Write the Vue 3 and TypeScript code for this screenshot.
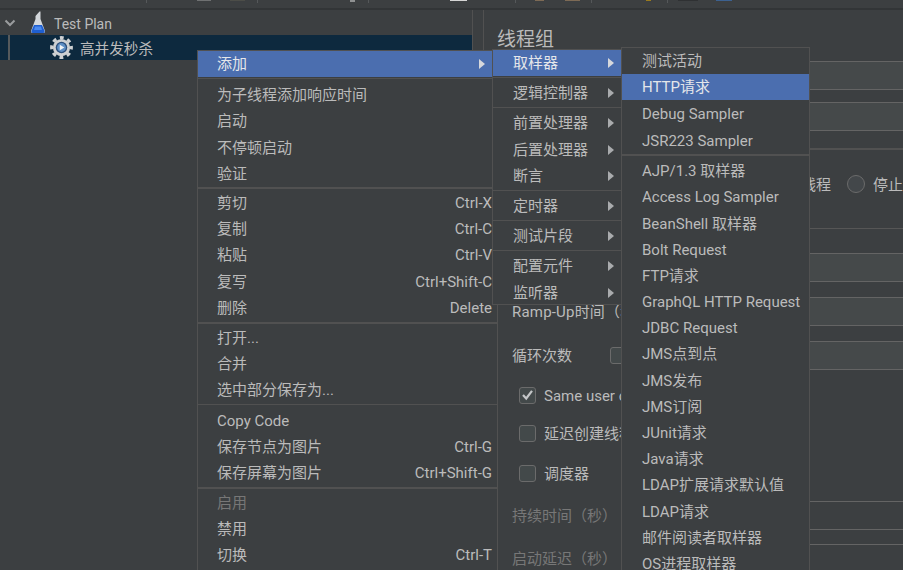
<script setup lang="ts">
interface Item { t?: string; k?: string; sel?: boolean; arrow?: boolean; off?: boolean; sep?: boolean; thick?: boolean }

const chips = [
  { x: 146, w: 1, h: 3, c: '#55585a' }, { x: 197, w: 14, h: 1, c: '#6f7172' }, { x: 230, w: 15, h: 1, c: '#4c4d48' },
  { x: 257, w: 1, h: 3, c: '#55585a' }, { x: 350, w: 5, h: 2, c: '#8f9192' }, { x: 368, w: 1, h: 3, c: '#55585a' },
  { x: 450, w: 17, h: 1, c: '#d5d5d5' }, { x: 515, w: 1, h: 3, c: '#55585a' }, { x: 535, w: 9, h: 1, c: '#7d6a55' },
  { x: 565, w: 15, h: 1, c: '#7d6a55' }, { x: 591, w: 1, h: 3, c: '#55585a' }, { x: 646, w: 5, h: 1, c: '#9a7b1e' },
  { x: 667, w: 1, h: 3, c: '#55585a' }, { x: 678, w: 20, h: 1, c: '#2f3133' }, { x: 716, w: 16, h: 1, c: '#3c6190' },
]
const chipList = chips.map((c, i) => ({ ...c, gap: i === 0 ? c.x : c.x - chips[i - 1].x - chips[i - 1].w }))

const main: Item[] = [
  { t: '添加', sel: true, arrow: true }, { sep: true },
  { t: '为子线程添加响应时间' }, { t: '启动' }, { t: '不停顿启动' }, { t: '验证' }, { sep: true, thick: true },
  { t: '剪切', k: 'Ctrl-X' }, { t: '复制', k: 'Ctrl-C' }, { t: '粘贴', k: 'Ctrl-V' }, { t: '复写', k: 'Ctrl+Shift-C' }, { t: '删除', k: 'Delete' }, { sep: true, thick: true },
  { t: '打开...' }, { t: '合并' }, { t: '选中部分保存为...' }, { sep: true },
  { t: 'Copy Code' }, { t: '保存节点为图片', k: 'Ctrl-G' }, { t: '保存屏幕为图片', k: 'Ctrl+Shift-G' }, { sep: true, thick: true },
  { t: '启用', off: true }, { t: '禁用' }, { t: '切换', k: 'Ctrl-T' },
]
const add: Item[] = [
  { t: '取样器', sel: true, arrow: true }, { sep: true },
  { t: '逻辑控制器', arrow: true }, { sep: true },
  { t: '前置处理器', arrow: true }, { t: '后置处理器', arrow: true }, { t: '断言', arrow: true }, { sep: true },
  { t: '定时器', arrow: true }, { sep: true },
  { t: '测试片段', arrow: true }, { sep: true },
  { t: '配置元件', arrow: true }, { t: '监听器', arrow: true },
]
const samplers: Item[] = [
  { t: '测试活动' }, { t: 'HTTP请求', sel: true }, { t: 'Debug Sampler' }, { t: 'JSR223 Sampler' }, { sep: true, thick: true },
  ...['AJP/1.3 取样器', 'Access Log Sampler', 'BeanShell 取样器', 'Bolt Request', 'FTP请求', 'GraphQL HTTP Request', 'JDBC Request', 'JMS点到点', 'JMS发布', 'JMS订阅', 'JUnit请求', 'Java请求', 'LDAP扩展请求默认值', 'LDAP请求', '邮件阅读者取样器', 'OS进程取样器'].map((t) => ({ t })),
]
const menus = [
  { cls: 'menu-main', items: main },
  { cls: 'menu-add', items: add },
  { cls: 'menu-samplers', items: samplers },
]
</script>

<template>
  <div class="app">
    <div class="toolbar">
      <i v-for="c in chipList" :key="c.x" class="chip" :style="{ marginLeft: c.gap + 'px', width: c.w + 'px', height: c.h + 'px', background: c.c }"></i>
    </div>
    <div class="body">
      <div class="tree">
        <div class="node root">
          <svg class="chev" width="12" height="8" viewBox="0 0 12 8"><path d="M1.5 1.5 L6 6 L10.5 1.5" fill="none" stroke="#9a9c9e" stroke-width="2" /></svg>
          <svg class="flask" width="16" height="23" viewBox="0 0 16 23">
            <path d="M9.5 0.5 L10.5 0.5 L10.5 8 L15 20 Q15.5 22 13.5 22 L2.5 22 Q0.5 22 1 20 L5.5 8 L5.5 5 Z" fill="#d4d8dc" />
            <path d="M4 14 L12 14 L14.6 20 Q15 22 13.4 22 L2.6 22 Q1 22 1.4 20 Z" fill="#1f5fd0" />
            <path d="M5 15.5 L11 15.5 L12 19 L4 19 Z" fill="#4a8af0" />
          </svg>
          <span class="label">Test Plan</span>
        </div>
        <div class="node selected">
          <i class="guide"></i>
          <svg class="gear" width="23" height="23" viewBox="0 0 24 24">
            <circle cx="12" cy="12" r="9" fill="#cfd1d3" />
            <circle cx="12" cy="12" r="10.2" fill="none" stroke="#cfd1d3" stroke-width="3.4" stroke-dasharray="4 4.01" stroke-dashoffset="2" />
            <circle cx="12" cy="12" r="6" fill="#2c4f7c" />
            <circle cx="12" cy="12" r="4.6" fill="#5f8fc4" />
            <path d="M10.2 9.2 L15 12 L10.2 14.8 Z" fill="#f2f4f6" />
          </svg>
          <span class="label">高并发秒杀</span>
        </div>
      </div>
      <div class="splitter"></div>
      <div class="pane">
        <h1 class="title">线程组</h1>
        <div class="field name"></div>
        <div class="field comment"></div>
        <div class="rule"></div>
        <div class="radios">
          <span class="radio-text">停止线程</span>
          <i class="radio"></i>
          <span class="radio-text">停止测试</span>
        </div>
        <div class="rule second"></div>
        <div class="field threads"></div>
        <div class="form-row ramp"><span class="form-label wide">Ramp-Up时间（秒）</span><div class="field grow"></div></div>
        <div class="form-row loop">
          <span class="form-label">循环次数</span>
          <i class="check"></i>
          <div class="field grow"></div>
        </div>
        <div class="check-row same">
          <i class="check on"><svg width="13" height="12" viewBox="0 0 13 12"><path d="M2 6 L5.2 9.5 L11 1.8" fill="none" stroke="#c4c6c8" stroke-width="2.2" /></svg></i>
          <span>Same user on each iteration</span>
        </div>
        <div class="check-row delay"><i class="check"></i><span>延迟创建线程直到需要</span></div>
        <div class="check-row sched"><i class="check"></i><span>调度器</span></div>
        <div class="form-row duration"><span class="form-label wide off">持续时间（秒）</span><div class="field grow plain"></div></div>
        <div class="form-row startup"><span class="form-label wide off">启动延迟（秒）</span><div class="field grow plain"></div></div>
      </div>
    </div>

    <div v-for="m in menus" :key="m.cls" class="menu" :class="m.cls">
      <template v-for="(it, i) in m.items" :key="i">
        <div v-if="it.sep" class="sep" :class="{ thick: it.thick }"></div>
        <div v-else class="item" :class="{ sel: it.sel, off: it.off }">
          <span class="text">{{ it.t }}</span>
          <span v-if="it.k" class="key">{{ it.k }}</span>
          <i v-if="it.arrow" class="arrow"></i>
        </div>
      </template>
    </div>
  </div>
</template>

<style scoped>
.app {
  position: relative;
  width: 903px;
  height: 570px;
  overflow: hidden;
  display: flex;
  flex-direction: column;
  background: #3c3f41;
  color: #bbbbbb;
  font: 15px/20px Roboto, "Noto Sans CJK SC", sans-serif;
}
.toolbar { height: 8px; display: flex; flex: none; align-items: flex-start; border-bottom: 2px solid #323537; box-sizing: content-box; }
.chip { display: block; flex: none; }
.body { flex: 1; display: flex; min-height: 0; }
.tree { width: 472px; flex: none; padding-top: 1px; }
.node { display: flex; align-items: center; position: relative; }
.root { height: 24px; }
.selected { height: 25px; background: #0d293e; }
.chev { margin-left: 4px; flex: none; }
.flask { margin-left: 14px; margin-top: -2px; flex: none; }
.label { color: #bbbbbb; white-space: nowrap; padding-top: 2px; }
.root .label { margin-left: 8px; font-size: 14px; }
.guide { position: absolute; left: 8px; top: 0; bottom: 0; width: 2px; background: #565a5c; }
.gear { margin-left: 50px; flex: none; }
.selected .label { margin-left: 7px; font-size: 14.6px; }
.splitter { width: 12px; flex: none; border-left: 1px solid #515151; border-right: 1px solid #515151; box-sizing: border-box; }
.pane { flex: 1; min-width: 0; padding-left: 14px; }
.title { margin: 18px 0 0 -1px; font-size: 19px; line-height: 24px; font-weight: 400; color: #bbbbbb; height: 24px; }
.field { background: #45494a; border: 1px solid #646464; border-right: 0; box-sizing: border-box; height: 29px; margin-left: 100px; }
.name { margin-top: 9px; }
.comment { margin-top: 12px; height: 29px; }
.rule { height: 2px; background: #515151; margin-top: 17px; }
.radios { display: flex; align-items: center; white-space: nowrap; height: 24px; margin-top: 22px; margin-left: 273px; }
.radio { width: 18px; height: 18px; border: 1px solid #6b6b6b; border-radius: 50%; background: #43474a; box-sizing: border-box; margin: 0 8px 0 16px; flex: none; }
.radio-text { flex: none; padding-top: 2px; }
.rule.second { height: 1px; margin-top: 32px; background: #565656; }
.threads { margin-top: 24px; }
.form-row { display: flex; align-items: center; height: 29px; padding-left: 14px; white-space: nowrap; }
.form-label { flex: none; width: 98px; }
.form-label.wide { width: 200px; }
.ramp .form-label { letter-spacing: 0.2px; }
.form-row .field { margin-left: 0; flex: 1; }
.ramp { margin-top: 15px; }
.loop { margin-top: 15px; }
.check { width: 17px; height: 17px; flex: none; border: 1px solid #6b6b6b; border-radius: 3px; background: #43494a; box-sizing: border-box; display: flex; align-items: center; justify-content: center; }
.loop .check { margin-right: 60px; }
.check-row { display: flex; align-items: center; gap: 8px; height: 20px; padding-left: 21px; white-space: nowrap; }
.check-row span { padding-top: 2px; }
.same { margin-top: 15px; }
.delay { margin-top: 18px; }
.sched { margin-top: 20px; }
.duration { margin-top: 18px; }
.startup { margin-top: 14px; }
.off { color: #777777; }
.plain { background: #3c3f41; }

.menu { position: absolute; background: #3c3f41; border: 1px solid #515151; box-sizing: border-box; display: flex; flex-direction: column; }
.menu-main { left: 197px; top: 50px; width: 301px; height: 530px; }
.menu-add { left: 492px; top: 49px; width: 130px; height: 256px; }
.menu-samplers { left: 621px; top: 47px; width: 189px; height: 540px; }
.item { height: 26.2px; flex: none; display: flex; align-items: center; position: relative; padding-left: 19px; box-sizing: border-box; white-space: nowrap; }
.menu-add .item { padding-left: 20px; }
.menu-samplers .item { padding-left: 20px; }
.menu-samplers .item:nth-child(3), .menu-samplers .item:nth-child(4) { padding-top: 2px; }
.item.sel { background: #4b6eaf; color: #e4e6ea; }
.item.off { color: #777777; }
.key { margin-left: auto; margin-right: 5px; }
.arrow { position: absolute; right: 7px; top: 8px; width: 0; height: 0; border-left: 6px solid #a9abad; border-top: 5px solid transparent; border-bottom: 5px solid transparent; }
.menu-main .arrow { right: 12px; }
.sel .arrow { border-left-color: #d6d8dc; }
.sep { height: 4px; flex: none; position: relative; }
.menu-main .sep:nth-child(2) { height: 5px; }
.menu-main .sep:nth-child(7) { height: 3px; }
.menu-samplers .sep { height: 5.3px; }
.sep::after { content: ""; position: absolute; left: 0; right: 0; top: 1px; height: 1px; background: #515151; }
.sep.thick::after { height: 2px; }
.menu-main .sep:nth-child(7)::after { top: 0; }
</style>

<style>
html, body { margin: 0; background: #3c3f41; }
</style>
